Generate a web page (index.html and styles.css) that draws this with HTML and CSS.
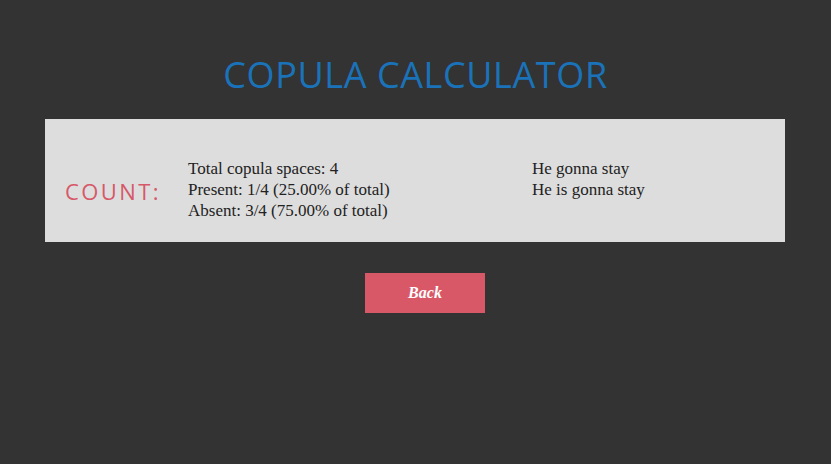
FILE: index.html
```html
<!DOCTYPE html>
<html>
<head>
<meta charset="utf-8">
<link rel="stylesheet" href="styles.css">
</head>
<body>
<h1 class="title">COPULA CALCULATOR</h1>
<section class="panel">
  <div class="label">COUNT:</div>
  <div class="stats">
    <div>Total copula spaces: 4</div>
    <div>Present: 1/4 (25.00% of total)</div>
    <div>Absent: 3/4 (75.00% of total)</div>
  </div>
  <div class="examples">
    <div>He gonna stay</div>
    <div>He is gonna stay</div>
  </div>
</section>
<div class="actions">
  <button class="back">Back</button>
</div>
</body>
</html>
```
FILE: styles.css
```css
html, body {
  margin: 0;
  padding: 0;
  background: #333333;
}
body {
  width: 831px;
  height: 464px;
  overflow: hidden;
}
.title {
  margin: 0;
  padding-top: 55px;
  height: 64px;
  text-align: center;
  font-family: "Open Sans", sans-serif;
  font-weight: 400;
  font-size: 36px;
  letter-spacing: 0.6px;
  line-height: 40px;
  color: #1a72b9;
}
.panel {
  margin: 0 46px 0 45px;
  background: #dddddd;
  display: flex;
  align-items: center;
  padding: 39px 0 21px;
  height: 63px;
}
.label {
  width: 123px;
  padding-left: 20px;
  font-family: "Open Sans", sans-serif;
  font-size: 22px;
  letter-spacing: 2.4px;
  color: #d75868;
  padding-top: 3px;
}
.stats, .examples {
  font-family: "Liberation Serif", serif;
  font-size: 17px;
  line-height: 21px;
  color: #222222;
  align-self: flex-start;
}
.stats {
  width: 344px;
}
.actions {
  display: flex;
  justify-content: center;
  padding-left: 19px;
  margin-top: 31px;
}
.back {
  width: 120px;
  height: 40px;
  border: none;
  background: #d95868;
  color: #ffffff;
  font-family: "Liberation Serif", serif;
  font-style: italic;
  font-weight: bold;
  font-size: 16px;
}
```
